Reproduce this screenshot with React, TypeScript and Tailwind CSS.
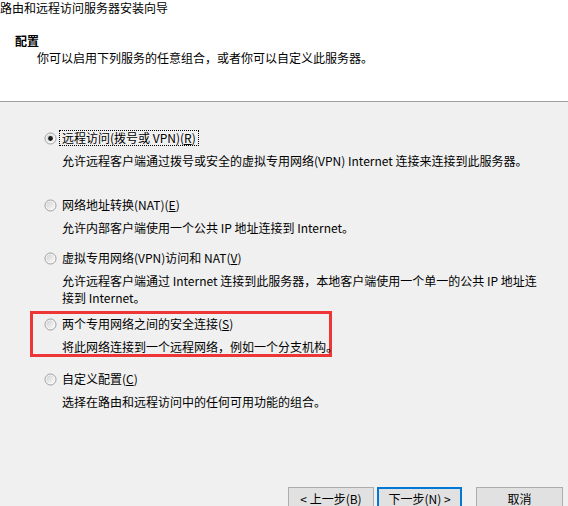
import React from 'react';

type Opt = {
  label: string;
  key: string;
  tail?: string;
  desc: React.ReactNode;
  checked?: boolean;
  focused?: boolean;
};

function Radio({ checked }: { checked?: boolean }) {
  return (
    <svg width="13" height="13" viewBox="0 0 13 13" className="shrink-0">
      <defs>
        <linearGradient id={checked ? 'rg-on' : 'rg-off'} x1="0" y1="0" x2="1" y2="1">
          <stop offset="0" stopColor="#d2d2d2" />
          <stop offset="1" stopColor="#fbfbfb" />
        </linearGradient>
      </defs>
      <circle cx="6.5" cy="6.5" r="5.5" fill="#fdfdfd" stroke="#9a9a9a" strokeWidth="1" />
      <circle cx="6.5" cy="6.5" r="4.2" fill={`url(#${checked ? 'rg-on' : 'rg-off'})`} />
      {checked && <circle cx="6.5" cy="6.5" r="2.4" fill="#1b1b1b" />}
    </svg>
  );
}

function Row({ opt }: { opt: Opt }) {
  return (
    <div>
      <div className="flex items-center h-[16px]">
        <Radio checked={opt.checked} />
        <span
          className={`ml-[2px] px-[2px] leading-[14px] whitespace-nowrap border ${
            opt.focused ? 'border-dotted border-black' : 'border-transparent'
          }`}
        >
          {opt.label}
          <span className="underline">{opt.key}</span>
          {opt.tail}
        </span>
      </div>
      <div className="mt-[6px] ml-[18px] leading-[17px] whitespace-nowrap">{opt.desc}</div>
    </div>
  );
}

const options: Opt[] = [
  {
    label: '远程访问(拨号或 VPN)(',
    key: 'R',
    tail: ')',
    desc: '允许远程客户端通过拨号或安全的虚拟专用网络(VPN) Internet 连接来连接到此服务器。',
    checked: true,
    focused: true,
  },
  {
    label: '网络地址转换(NAT)(',
    key: 'E',
    tail: ')',
    desc: '允许内部客户端使用一个公共 IP 地址连接到 Internet。',
  },
  {
    label: '虚拟专用网络(VPN)访问和 NAT(',
    key: 'V',
    tail: ')',
    desc: (
      <>
        允许远程客户端通过 Internet 连接到此服务器，本地客户端使用一个单一的公共 IP 地址连
        <br />
        接到 Internet。
      </>
    ),
  },
  {
    label: '两个专用网络之间的安全连接(',
    key: 'S',
    tail: ')',
    desc: '将此网络连接到一个远程网络，例如一个分支机构。',
  },
  {
    label: '自定义配置(',
    key: 'C',
    tail: ')',
    desc: '选择在路由和远程访问中的任何可用功能的组合。',
  },
];

export default function App() {
  return (
    <div className="w-[568px] h-[506px] overflow-hidden bg-[#f0f0f0] text-black text-[12px] font-['Noto_Sans_CJK_SC','Noto_Sans',sans-serif]">
      {/* Header */}
      <div className="h-[102px] bg-white border-b border-[#a0a0a0]">
        <div className="leading-[16px]">路由和远程访问服务器安装向导</div>
        <div className="mt-[17px] pl-[15px] leading-[16px] font-bold">配置</div>
        <div className="mt-[1px] pl-[37px] leading-[16px]">你可以启用下列服务的任意组合，或者你可以自定义此服务器。</div>
      </div>

      {/* Options */}
      <div className="pt-[28px]">
        <div className="pl-[44px]">
          <Row opt={options[0]} />
        </div>
        <div className="pl-[44px] mt-[28px]">
          <Row opt={options[1]} />
        </div>
        <div className="pl-[44px] mt-[14px]">
          <Row opt={options[2]} />
        </div>
        <div className="ml-[30px] mt-[5px] w-[302px] h-[46px] border-[3px] border-[#ee3636] pl-[11px] pt-[2px]">
          <Row opt={options[3]} />
        </div>
        <div className="pl-[44px] mt-[14px]">
          <Row opt={options[4]} />
        </div>
      </div>

      {/* Buttons */}
      <div className="flex mt-[77px] pl-[288px]">
        <button className="w-[86px] h-[23px] border border-[#adadad] bg-[#e1e1e1] leading-[21px]">&lt; 上一步(B)</button>
        <button className="ml-[3px] w-[85px] h-[23px] border-2 border-[#0078d7] bg-[#e1e1e1] leading-[19px]">下一步(N) &gt;</button>
        <button className="ml-[14px] w-[87px] h-[23px] border border-[#adadad] bg-[#e1e1e1] leading-[21px]">取消</button>
      </div>
    </div>
  );
}
